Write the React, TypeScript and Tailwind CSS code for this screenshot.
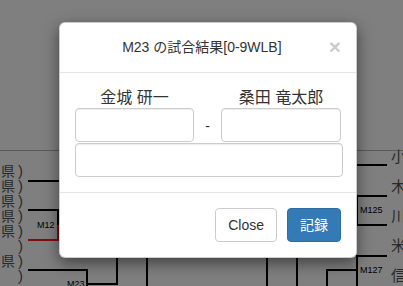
import React from "react";

const font = { fontFamily: '"Liberation Sans", "Noto Sans CJK JP", sans-serif' };

function Bracket() {
  const leftRows = ["県", "県", "県", "県", "県", "", "県", ""];
  const rightChars = ["小", "木", "川", "米", "信"];
  return (
    <div className="absolute inset-0 bg-white" style={font}>
      <div className="absolute left-0 top-[150px] h-px w-[403px] bg-[#b5b5b5]" />
      <div className="absolute left-0 top-[164px] flex flex-col">
        {leftRows.map((c, i) => (
          <div key={i} className="flex h-[14.9px] items-center text-[14px] leading-[16px] text-[#555]">
            <span className="w-[16px] pl-[1px]">{c}</span>
            <span className="ml-[2px] text-[15px]">)</span>
          </div>
        ))}
      </div>
      {/* left lines */}
      <div className="absolute left-[28px] top-[180px] h-[2px] w-[40px] bg-black" />
      <div className="absolute left-[28px] top-[209px] h-[2px] w-[31px] bg-black" />
      <div className="absolute left-[57px] top-[209px] h-[16px] w-[2px] bg-black" />
      <div className="absolute left-[57px] top-[225px] h-[16px] w-[2px] bg-[#ff1a1a]" />
      <div className="absolute left-[28px] top-[239px] h-[2px] w-[31px] bg-[#ff1a1a]" />
      <div className="absolute left-[37px] top-[219px] text-[9px] leading-[12px] text-black">M12</div>
      <div className="absolute left-[28px] top-[269px] h-[2px] w-[60px] bg-black" />
      <div className="absolute left-[86px] top-[269px] h-[17px] w-[2px] bg-black" />
      <div className="absolute left-[67px] top-[278px] text-[9px] leading-[12px] text-black">M23</div>
      <div className="absolute left-[116px] top-[240px] h-[45px] w-[2px] bg-black" />
      <div className="absolute left-[86px] top-[283px] h-[2px] w-[32px] bg-black" />
      <div className="absolute left-[146px] top-[240px] h-[46px] w-[2px] bg-black" />
      <div className="absolute left-[266px] top-[240px] h-[46px] w-[2px] bg-black" />
      <div className="absolute left-[296px] top-[240px] h-[46px] w-[2px] bg-black" />
      {/* right lines */}
      <div className="absolute left-[340px] top-[164px] h-[2px] w-[47px] bg-black" />
      <div className="absolute left-[356px] top-[195px] h-[31px] w-[31px] border-y-2 border-l-2 border-black pl-[2px] pt-[7px] text-[9px] leading-[12px] text-black">M125</div>
      <div className="absolute left-[356px] top-[255px] h-[31px] w-[31px] border-t-2 border-l-2 border-black pl-[2px] pt-[7px] text-[9px] leading-[12px] text-black">M127</div>
      <div className="absolute left-[326px] top-[269px] h-[2px] w-[31px] bg-black" />
      <div className="absolute left-[326px] top-[269px] h-[17px] w-[2px] bg-black" />
      <div className="absolute left-[391px] top-[148px] flex flex-col">
        {rightChars.map((c, i) => (
          <div key={i} className="h-[29.8px] text-[15px] leading-[18px] text-[#555]">
            {c}
          </div>
        ))}
      </div>
    </div>
  );
}

const inputCls =
  "h-[34px] rounded-[4px] border border-[#ccc] bg-white shadow-[inset_0_1px_1px_rgba(0,0,0,0.075)]";

export default function App() {
  return (
    <div className="relative h-[286px] w-[403px] overflow-hidden" style={font}>
      <Bracket />
      <div className="absolute inset-0 bg-black/50" />
      <div className="absolute inset-0 pl-[59px] pt-[22px]">
        <div className="w-[298px] rounded-[6px] border border-black/20 bg-white shadow-[0_5px_15px_rgba(0,0,0,0.5)]">
          <div className="flex items-center border-b border-[#e5e5e5] px-[15px] pt-[14px] pb-[15px]">
            <div className="flex-1 text-center text-[14px] leading-[20px] text-[#333]">M23 の試合結果[0-9WLB]</div>
            <div className="text-[21px] font-bold leading-[20px] text-black opacity-20">×</div>
          </div>
          <div className="p-[15px]">
            <div className="flex">
              <div className="flex w-[120px] flex-col">
                <div className="text-center text-[16px] leading-[20px] text-[#333]">金城 研一</div>
                <div className={inputCls} />
              </div>
              <div className="flex w-[27px] items-end justify-center pb-[6px] text-[14px] leading-[20px] text-[#333]">-</div>
              <div className="flex w-[121px] flex-col">
                <div className="text-center text-[16px] leading-[20px] text-[#333]">桑田 竜太郎</div>
                <div className={inputCls} />
              </div>
            </div>
            <div className={"mt-px w-[268px] " + inputCls} />
          </div>
          <div className="flex justify-end gap-[10px] border-t border-[#e5e5e5] p-[15px]">
            <button className="h-[34px] rounded-[4px] border border-[#ccc] bg-white px-[12px] text-[14px] leading-[20px] text-[#333]">Close</button>
            <button className="h-[34px] rounded-[4px] border border-[#2e6da4] bg-[#337ab7] px-[12px] text-[14px] leading-[20px] text-white">記録</button>
          </div>
        </div>
      </div>
    </div>
  );
}
